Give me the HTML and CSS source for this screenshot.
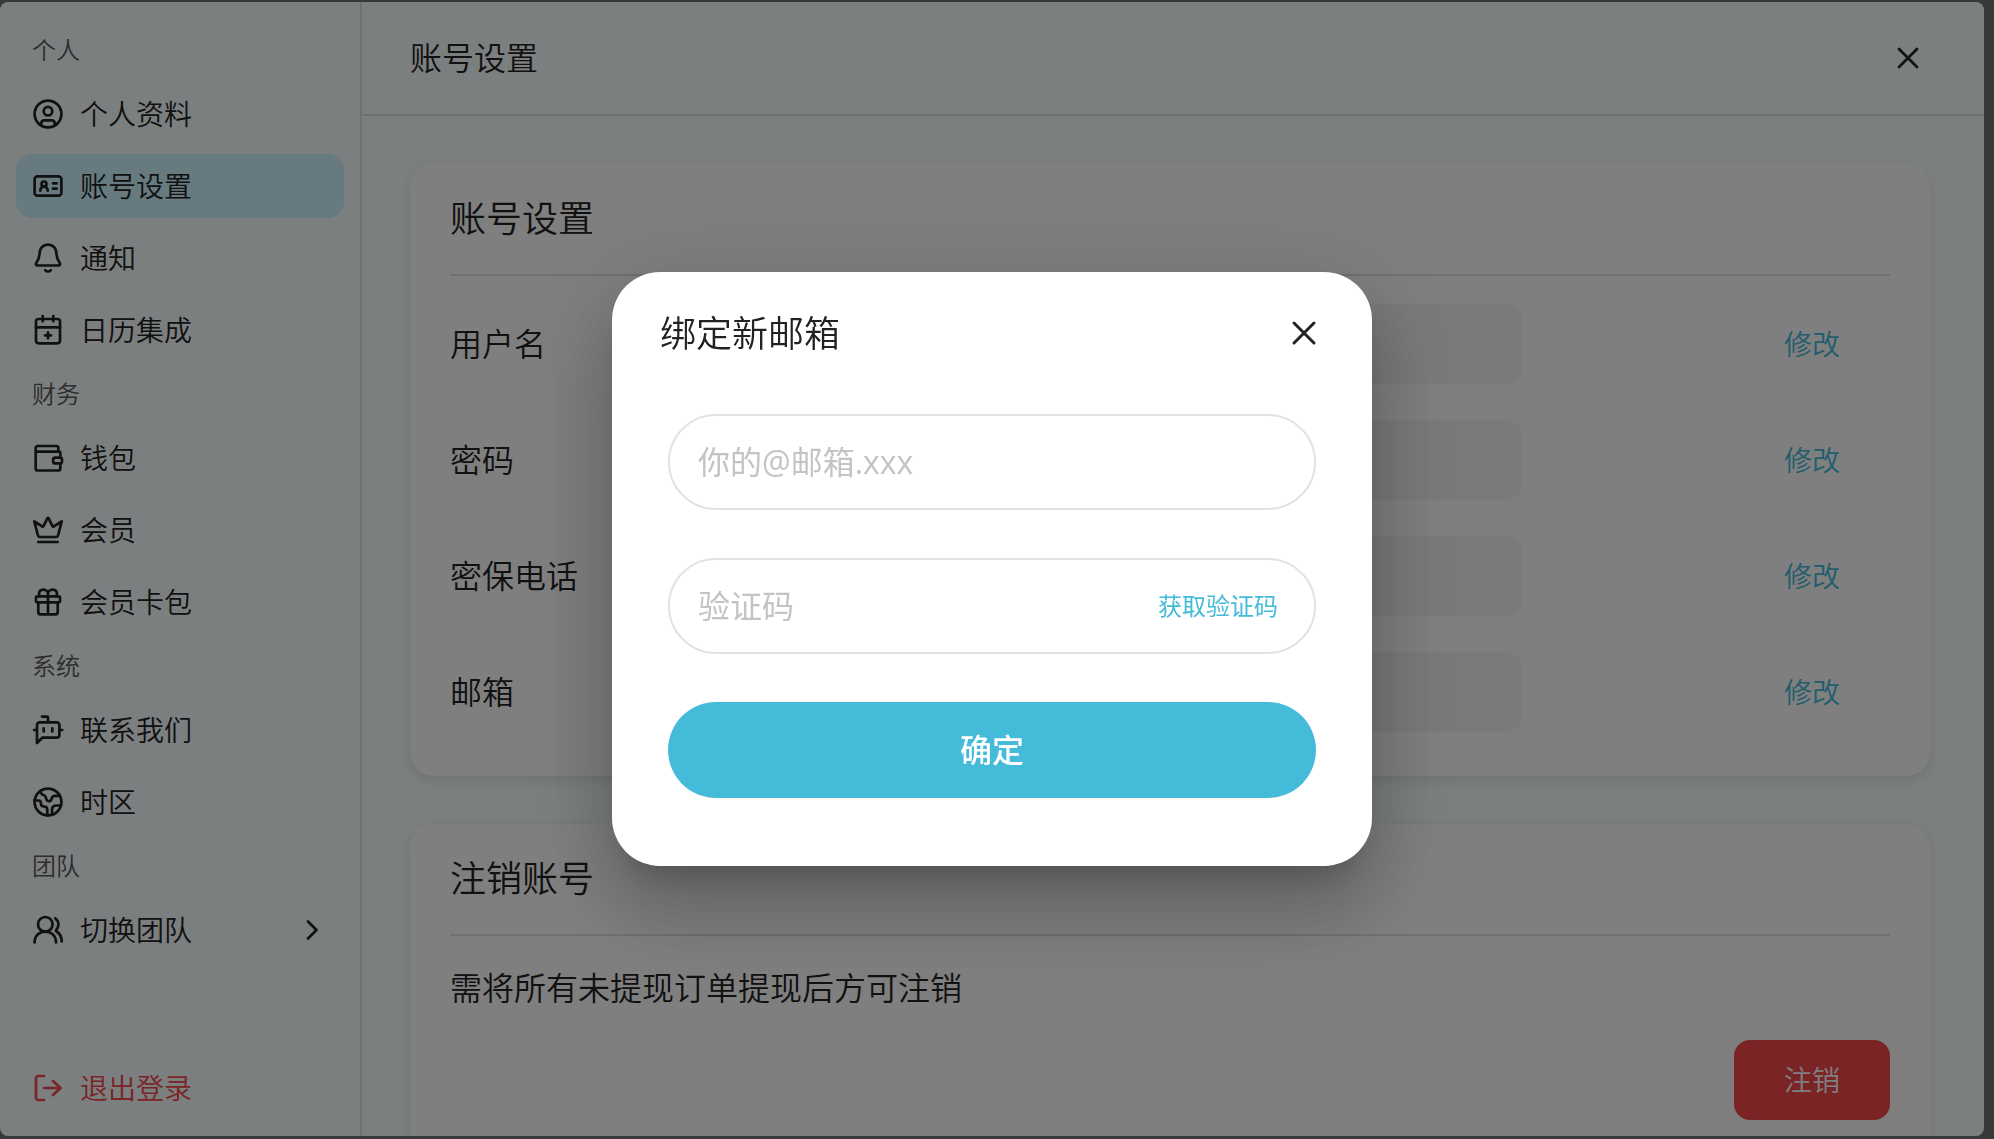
FILE: index.html
```html
<!DOCTYPE html>
<html lang="zh-CN">
<head>
    <meta charset="UTF-8">
    <meta name="viewport" content="width=device-width, initial-scale=1.0">
    <title>账号设置</title>
    <link rel="stylesheet" href="styles.css">
</head>
<body>
    <div class="settings">
        <nav class="sidebar">
            <h3 class="nav-label">个人</h3>
            <a class="nav-item" href="#">
                <svg class="icon" viewBox="0 0 32 32"><circle cx="16" cy="16" r="13.4"/><circle cx="16" cy="13.2" r="4.3"/><path d="M9.3 27v-1.8a2.8 2.8 0 0 1 2.8-2.8h7.8a2.8 2.8 0 0 1 2.8 2.8V27"/></svg>
                <span>个人资料</span>
            </a>
            <a class="nav-item active" href="#">
                <svg class="icon" viewBox="0 0 32 32"><rect x="2.6" y="6.3" width="26.8" height="19.4" rx="3"/><circle cx="12" cy="14" r="2.5"/><path d="M8.3 20.7c0-5.3 7.4-5.3 7.4 0M21 13.3h3.6M21 18.7h3.6"/></svg>
                <span>账号设置</span>
            </a>
            <a class="nav-item" href="#">
                <svg class="icon" viewBox="0 0 32 32"><path d="M16 2.6c-4.900 0-8.200 3.600-8.400 8.200-.2 5.300-.9 7-3.200 10-1 1.400-.3 2.700 1.400 2.700h20.400c1.700 0 2.400-1.300 1.400-2.700-2.300-3-3-4.700-3.200-10C24.200 6.200 20.900 2.600 16 2.600zM13.300 28.300c1.500 1.600 3.900 1.600 5.400 0"/></svg>
                <span>通知</span>
            </a>
            <a class="nav-item" href="#">
                <svg class="icon" viewBox="0 0 32 32"><rect x="4" y="5" width="24" height="24.300" rx="2.700"/><path d="M4 13.300h24M10.700 2v5.300M21.300 2v5.300M16 18.300v6M13 21.300h6"/></svg>
                <span>日历集成</span>
            </a>
            <h3 class="nav-label">财务</h3>
            <a class="nav-item" href="#">
                <svg class="icon" viewBox="0 0 32 32"><path d="M26.300 9.300V5.700A1.700 1.700 0 0 0 24.600 4H5.700a2 2 0 0 0-2 2v1.700a2 2 0 0 0 2 2h21.600a1 1 0 0 1 1 1V15M28.300 21.800v5a1.700 1.700 0 0 1-1.700 1.700H5.400a1.700 1.700 0 0 1-1.700-1.700V7"/><rect x="21.200" y="15.600" width="8.800" height="5.800" rx="2"/></svg>
                <span>钱包</span>
            </a>
            <a class="nav-item" href="#">
                <svg class="icon" viewBox="0 0 32 32"><path d="M2.300 7.300 6 21.500A2 2 0 0 0 8 23h16a2 2 0 0 0 2-1.500l3.700-14.200-8 5.200a.8.8 0 0 1-1.200-.3l-3.900-7.900a.7.7 0 0 0-1.200 0l-3.900 7.900a.8.8 0 0 1-1.200.3zM6.300 28h19.400"/></svg>
                <span>会员</span>
            </a>
            <a class="nav-item" href="#">
                <svg class="icon" viewBox="0 0 32 32"><rect x="4" y="10.300" width="24" height="6" rx="1.500"/><path d="M6.300 16.300v10a2 2 0 0 0 2 2h15.400a2 2 0 0 0 2-2v-10M16 10.300v18M16 10.300V8a4.300 4.300 0 0 0-4.300-4.300c-4.300 0-5.800 3.500-4 6.600M16 10.300V8a4.300 4.300 0 0 1 4.300-4.300c4.300 0 5.800 3.500 4 6.600"/></svg>
                <span>会员卡包</span>
            </a>
            <h3 class="nav-label">系统</h3>
            <a class="nav-item" href="#">
                <svg class="icon" viewBox="0 0 32 32"><path d="M10 2.600h5a1 1 0 0 1 1 1V8M5 29V11a2.700 2.700 0 0 1 2.700-2.700h17a2.700 2.700 0 0 1 2.700 2.700v10a2.700 2.700 0 0 1-2.700 2.700H10.300zM2 16h3M27.300 16h3M11.700 14.300v3.200M20.300 14.300v3.200"/></svg>
                <span>联系我们</span>
            </a>
            <a class="nav-item" href="#">
                <svg class="icon" viewBox="0 0 32 32"><circle cx="16" cy="16" r="13.400"/><path d="M8.500 4.500c0 3 1 4 3 4.500s2 1 2.500 3 1.300 3.300 3 3.300 2.500-1.300 2.800-3 1.500-2.500 3.500-2.500h4M2.500 14.500h4c2 0 2.500 1 2.500 3s1 3 3 3 3.300 1 3.300 3v6M29 19.500h-4.500c-3 0-4.500 1.500-4.500 4.500v4.500"/></svg>
                <span>时区</span>
            </a>
            <h3 class="nav-label">团队</h3>
            <a class="nav-item" href="#">
                <svg class="icon" viewBox="0 0 32 32"><circle cx="13.300" cy="10.300" r="7.300"/><path d="M2.600 28.500c0-14.500 21.400-14.500 21.400 0M23.300 4.300c4 3 4 8.700.7 12M24 17c3.800 2.300 5.700 6 5.700 10.500"/></svg>
                <span>切换团队</span>
                <svg class="icon nav-arrow" viewBox="0 0 32 32"><path d="m12 7.500 8.500 8.500-8.500 8.500"/></svg>
            </a>
            <a class="nav-item logout" href="#">
                <svg class="icon" viewBox="0 0 32 32"><path d="M12 4H6.300A2.300 2.300 0 0 0 4 6.300v19.400A2.300 2.300 0 0 0 6.300 28H12M12 16h16M21 9l7.500 7-7.500 7"/></svg>
                <span>退出登录</span>
            </a>
        </nav>

        <main class="main">
            <header class="main-header">
                <h1>账号设置</h1>
                <button class="icon-btn" type="button" aria-label="关闭">
                    <svg class="icon" viewBox="0 0 32 32"><path d="m7 7 18 18M25 7 7 25"/></svg>
                </button>
            </header>
            <div class="content">
                <section class="card">
                    <h2>账号设置</h2>
                    <div class="field-row">
                        <label for="username">用户名</label>
                        <input id="username" type="text" readonly>
                        <button class="edit-btn" type="button">修改</button>
                    </div>
                    <div class="field-row">
                        <label for="password">密码</label>
                        <input id="password" type="password" readonly>
                        <button class="edit-btn" type="button">修改</button>
                    </div>
                    <div class="field-row">
                        <label for="phone">密保电话</label>
                        <input id="phone" type="tel" readonly>
                        <button class="edit-btn" type="button">修改</button>
                    </div>
                    <div class="field-row">
                        <label for="email">邮箱</label>
                        <input id="email" type="email" readonly>
                        <button class="edit-btn" type="button">修改</button>
                    </div>
                </section>
                <section class="card">
                    <h2>注销账号</h2>
                    <p>需将所有未提现订单提现后方可注销</p>
                    <button class="danger-btn" type="button">注销</button>
                </section>
            </div>
        </main>
    </div>

    <div class="overlay">
        <form class="dialog" role="dialog" aria-labelledby="dialog-title">
            <div class="dialog-header">
                <h2 id="dialog-title">绑定新邮箱</h2>
                <button class="icon-btn" type="button" aria-label="关闭">
                    <svg class="icon" viewBox="0 0 32 32"><path d="m6 6 20 20M26 6 6 26"/></svg>
                </button>
            </div>
            <div class="dialog-body">
                <div class="input-box">
                    <input type="text" placeholder="你的@邮箱.xxx" aria-label="邮箱">
                </div>
                <div class="input-box">
                    <input type="text" placeholder="验证码" aria-label="验证码">
                    <button class="code-btn" type="button">获取验证码</button>
                </div>
                <button class="submit-btn" type="submit">确定</button>
            </div>
        </form>
    </div>
</body>
</html>
```
FILE: styles.css
```css
* {
    box-sizing: border-box;
    margin: 0;
    padding: 0;
}

body {
    height: 100vh;
    padding: 2px 10px 3px 0;
    overflow: hidden;
    background-color: #707070;
    color: #222;
    font-family: "Open Sans", "Noto Sans CJK SC", sans-serif;
    font-size: 32px;
    line-height: 1.25;
}

h1, h2, h3 {
    font-weight: 350;
}

a {
    color: inherit;
    text-decoration: none;
}

button, input {
    border: none;
    background: none;
    color: inherit;
    font: inherit;
}

button {
    cursor: pointer;
}

.icon {
    display: block;
    flex: none;
    width: 32px;
    height: 32px;
    fill: none;
    stroke: currentColor;
    stroke-width: 2.7;
    stroke-linecap: round;
    stroke-linejoin: round;
}

/* 设置面板 */
.settings {
    display: flex;
    height: 100%;
    overflow: hidden;
    border-radius: 8px;
    background-color: #f8feff;
    font-weight: 350;
}

.sidebar {
    display: flex;
    flex: none;
    flex-direction: column;
    gap: 8px;
    width: 362px;
    padding: 24px 16px 16px;
    border-right: 2px solid #e2e1e5;
}

.nav-label {
    padding-left: 16px;
    color: #5a5a5a;
    font-size: 24px;
    line-height: 48px;
}

.nav-item {
    display: flex;
    flex: none;
    align-items: center;
    gap: 16px;
    height: 64px;
    padding: 0 16px;
    border-radius: 16px;
    font-size: 28px;
}

.nav-item.active {
    background-color: #ccf4fe;
}

.nav-arrow {
    margin-left: auto;
}

.logout {
    margin-top: auto;
    color: #f6484c;
}

.main {
    display: flex;
    flex: 1;
    flex-direction: column;
    min-width: 0;
}

.main-header {
    display: flex;
    flex: none;
    align-items: center;
    justify-content: space-between;
    height: 114px;
    padding: 0 60px 0 48px;
    border-bottom: 2px solid #e2e1e5;
}

.main-header h1 {
    font-size: 32px;
}

.content {
    display: flex;
    flex: 1;
    flex-direction: column;
    gap: 48px;
    min-height: 0;
    padding: 48px 54px 48px 48px;
    overflow: hidden;
}

.card {
    flex: none;
    padding: 0 40px 44px;
    border-radius: 24px;
    background-color: #fff;
    box-shadow: 0 4px 12px rgba(0, 0, 0, 0.1);
}

.card h2 {
    height: 112px;
    margin-bottom: 28px;
    border-bottom: 2px solid #e2e2e2;
    font-size: 36px;
    line-height: 110px;
}

.card p {
    line-height: 48px;
}

.field-row {
    display: grid;
    grid-template-columns: 240px 832px 1fr;
    align-items: center;
}

.field-row + .field-row {
    margin-top: 36px;
}

.field-row input {
    height: 80px;
    padding: 0 24px;
    border-radius: 16px;
    background-color: #f4f4f5;
}

.edit-btn {
    justify-self: end;
    width: 156px;
    height: 80px;
    color: #43bbd9;
    font-size: 28px;
}

.danger-btn {
    display: block;
    width: 156px;
    height: 80px;
    margin: 28px 0 0 auto;
    border-radius: 16px;
    background-color: #f6484c;
    color: #fff;
    font-size: 28px;
}

/* 绑定邮箱弹窗 */
.overlay {
    position: fixed;
    inset: 0;
    display: flex;
    align-items: center;
    justify-content: center;
    padding: 0 10px 1px 0;
    background-color: rgba(0, 0, 0, 0.5);
}

.dialog {
    width: 760px;
    padding: 32px 48px 68px;
    border-radius: 48px;
    background-color: #fff;
    box-shadow: 0 22px 30px -14px rgba(0, 0, 0, 0.2),
        0 48px 76px 6px rgba(0, 0, 0, 0.14),
        0 18px 92px 16px rgba(0, 0, 0, 0.12);
}

.dialog-header {
    display: flex;
    align-items: center;
    justify-content: space-between;
    height: 58px;
    margin-bottom: 52px;
    padding-right: 4px;
}

.dialog-header h2 {
    font-size: 36px;
}

.dialog-header .icon {
    stroke-width: 3;
}

.dialog-body {
    display: flex;
    flex-direction: column;
    gap: 48px;
    padding: 0 8px;
}

.input-box {
    display: flex;
    align-items: center;
    height: 96px;
    padding: 0 36px 0 28px;
    border: 2px solid #e2e1e5;
    border-radius: 48px;
}

.input-box input {
    flex: 1;
    min-width: 0;
    outline: none;
}

.input-box input::placeholder {
    color: #c4c4c4;
}

.code-btn {
    color: #43bbd9;
    font-size: 24px;
}

.submit-btn {
    height: 96px;
    border-radius: 48px;
    background-color: #43bbd9;
    color: #fff;
    font-weight: 500;
}
```
